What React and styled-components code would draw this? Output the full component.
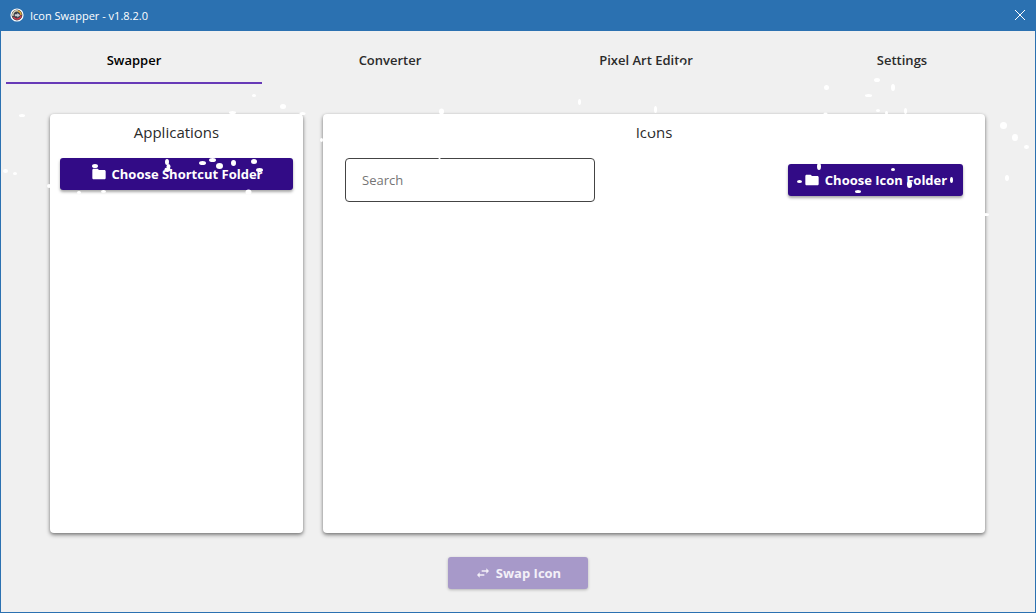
import { useState } from "react";
import styled, { createGlobalStyle } from "styled-components";

const GlobalStyle = createGlobalStyle`
  * {
    box-sizing: border-box;
  }

  body {
    margin: 0;
    font-family: "Open Sans", "Noto Sans", sans-serif;
    color: #2b2b2b;
    background-color: #f0f0f0;
  }
`;

const Window = styled.div`
  position: relative;
  display: flex;
  flex-direction: column;
  min-height: 100vh;
  border: 1px solid #2b71b1;
  border-top: none;
  overflow: hidden;
`;

const TitleBar = styled.header`
  display: flex;
  align-items: center;
  gap: 6px;
  height: 31px;
  padding: 0 9px 1px;
  background-color: #2b71b1;
  color: #fff;
`;

const Title = styled.h1`
  flex: 1;
  margin: 0;
  font-size: 11px;
  font-weight: 400;
`;

const CloseButton = styled.button`
  display: flex;
  padding: 0;
  border: none;
  background: none;
  color: #fff;
`;

const Tabs = styled.nav`
  display: flex;
  padding: 5px 5px 0;
`;

const Tab = styled.button`
  flex: 1;
  height: 48px;
  padding: 2px 0 0;
  border: none;
  border-bottom: 2px solid
    ${(props) => (props.$active ? "#673ab7" : "transparent")};
  background: none;
  color: ${(props) => (props.$active ? "#000" : "#2b2b2b")};
  font-family: inherit;
  font-size: 13px;
  font-weight: 600;
`;

const Main = styled.main`
  flex: 1;
  display: grid;
  grid-template-columns: 253px 1fr;
  gap: 20px;
  padding: 30px 50px 0 49px;
`;

const Panel = styled.section`
  padding: 8px ${(props) => (props.$wide ? "22px" : "10px")};
  border-radius: 4px;
  background-color: #fff;
  box-shadow: 0 2px 4px rgba(0, 0, 0, 0.4), 0 1px 3px rgba(0, 0, 0, 0.2);
`;

const Heading = styled.h2`
  margin: 0 0 16px;
  font-size: 15px;
  font-weight: 400;
  line-height: 20px;
  text-align: center;
`;

const Toolbar = styled.div`
  display: flex;
  align-items: center;
  justify-content: space-between;
`;

const SearchInput = styled.input`
  width: 250px;
  height: 44px;
  padding: 0 16px;
  border: 1px solid #444;
  border-radius: 4px;
  background-color: #fff;
  font-family: inherit;
  font-size: 13px;

  &::placeholder {
    color: #757575;
    opacity: 1;
  }
`;

const Button = styled.button`
  display: flex;
  align-items: center;
  justify-content: center;
  gap: 5px;
  width: ${(props) => props.$width || "100%"};
  height: 32px;
  padding: 0;
  border: none;
  border-radius: 3px;
  background-color: #320b86;
  color: #fff;
  box-shadow: 0 2px 3px rgba(0, 0, 0, 0.35);
  font-family: inherit;
  font-size: 13px;
  font-weight: 700;

  &:disabled {
    background-color: #a799c9;
    color: #f3f0f8;
    box-shadow: 0 1px 3px rgba(0, 0, 0, 0.25);
  }
`;

const Footer = styled.footer`
  display: flex;
  justify-content: center;
  padding: 24px 0 23px;
`;

const SnowLayer = styled.svg`
  position: absolute;
  top: 0;
  left: 0;
  width: 100%;
  height: 100%;
  pointer-events: none;
`;

// [x, y, rx, ry]
const flakes = [
  [22, 115.5, 3, 1.5],
  [254, 95.5, 2, 1.5],
  [283, 106.5, 3, 2.5],
  [232.5, 112.5, 3.5, 1.5],
  [302.5, 113.5, 3, 1.5],
  [5.5, 171, 2.5, 2],
  [15, 173.5, 2, 1.5],
  [49, 186, 2, 2],
  [95, 166, 3, 2],
  [167, 162, 2, 3],
  [168.5, 166.5, 2, 2.5],
  [167.5, 169.5, 3, 2],
  [202.5, 163, 3.5, 2],
  [212.5, 160, 3.5, 2],
  [219.5, 166, 3.5, 3],
  [233.5, 163, 2.5, 3],
  [254, 161.5, 3, 2.5],
  [259.5, 170, 3.5, 2],
  [79, 192.5, 2, 1.5],
  [103.5, 191.5, 2.5, 1.5],
  [248.5, 192, 3, 2.5],
  [321.5, 140, 1.5, 2],
  [220.5, 134, 2, 3],
  [441.5, 111.5, 2.5, 3],
  [439.5, 158.5, 1, 1],
  [579.5, 102, 1.5, 3],
  [655.5, 109.5, 1.5, 3.5],
  [650, 129, 5, 3],
  [680.5, 64.5, 3, 2],
  [826.5, 87.5, 2.5, 2.5],
  [877, 80, 3, 2],
  [893, 87.5, 2, 3.5],
  [868.5, 95.5, 3.5, 1.5],
  [878, 110.5, 2, 1.5],
  [886.5, 113, 1.5, 2],
  [905.5, 111, 1.5, 3],
  [825.5, 113.5, 2, 1],
  [1003.5, 125.5, 3.5, 3.5],
  [1015, 137.5, 3, 3.5],
  [1026.5, 147, 2.5, 2],
  [1007, 178, 2, 3],
  [986, 214.5, 3, 1.5],
  [819, 166.5, 2, 3.5],
  [893, 169.5, 2, 1.5],
  [799.5, 181.5, 2.5, 1.5],
  [909.5, 184.5, 2.5, 3.5],
  [951.5, 180, 1.5, 3],
  [858, 191.5, 3, 1.5],
];

const tabs = ["Swapper", "Converter", "Pixel Art Editor", "Settings"];

function LogoIcon() {
  return (
    <svg width="14" height="14" viewBox="0 0 14 14" aria-hidden="true">
      <circle cx="7" cy="7" r="6" fill="#3b3f48" stroke="#fff" strokeWidth="1.200" />
      <path d="M3 8a4 4 0 0 1 5-5" stroke="#d8d2b8" strokeWidth="1.400" fill="none" />
      <path d="M8 3a4 4 0 0 1 3 4" stroke="#e0a93c" strokeWidth="1.400" fill="none" />
      <path d="M11 7.500a4 4 0 0 1-7.500 1.500" stroke="#d23c4e" strokeWidth="1.400" fill="none" />
      <path d="M4.800 6.200h2.500V5l3 2.200-3 2.200V8.200H4.800z" fill="#c9ced6" />
    </svg>
  );
}

function FolderIcon() {
  return (
    <svg width="16" height="16" viewBox="0 0 24 24" aria-hidden="true">
      <path
        d="M10 4H4c-1.100 0-2 .9-2 2v12c0 1.100.9 2 2 2h16c1.100 0 2-.9 2-2V8c0-1.100-.9-2-2-2h-8z"
        fill="currentColor"
      />
    </svg>
  );
}

function SwapIcon() {
  return (
    <svg width="16" height="16" viewBox="0 0 24 24" aria-hidden="true">
      <path
        d="M21 9l-4-4v3h-7v2h7v3zM7 11l-4 4 4 4v-3h7v-2H7z"
        fill="currentColor"
      />
    </svg>
  );
}

function Snow() {
  return (
    <SnowLayer aria-hidden="true">
      {flakes.map(([x, y, rx, ry]) => (
        <ellipse key={`${x}-${y}`} cx={x - 1} cy={y} rx={rx} ry={ry} fill="#fff" />
      ))}
    </SnowLayer>
  );
}

export default function App() {
  const [activeTab, setActiveTab] = useState("Swapper");
  const [search, setSearch] = useState("");

  return (
    <>
      <GlobalStyle />
      <Window>
        <TitleBar>
          <LogoIcon />
          <Title>Icon Swapper - v1.8.2.0</Title>
          <CloseButton aria-label="Close">
            <svg width="12" height="12" viewBox="0 0 12 12">
              <path d="M1 1l10 10M11 1L1 11" stroke="currentColor" />
            </svg>
          </CloseButton>
        </TitleBar>
        <Tabs>
          {tabs.map((tab) => (
            <Tab
              key={tab}
              $active={tab === activeTab}
              onClick={() => setActiveTab(tab)}
            >
              {tab}
            </Tab>
          ))}
        </Tabs>
        <Main>
          <Panel>
            <Heading>Applications</Heading>
            <Button>
              <FolderIcon />
              Choose Shortcut Folder
            </Button>
          </Panel>
          <Panel $wide>
            <Heading>Icons</Heading>
            <Toolbar>
              <SearchInput
                type="text"
                aria-label="Search"
                placeholder="Search"
                value={search}
                onChange={(e) => setSearch(e.target.value)}
              />
              <Button $width="175px">
                <FolderIcon />
                Choose Icon Folder
              </Button>
            </Toolbar>
          </Panel>
        </Main>
        <Footer>
          <Button $width="140px" disabled>
            <SwapIcon />
            Swap Icon
          </Button>
        </Footer>
        <Snow />
      </Window>
    </>
  );
}
